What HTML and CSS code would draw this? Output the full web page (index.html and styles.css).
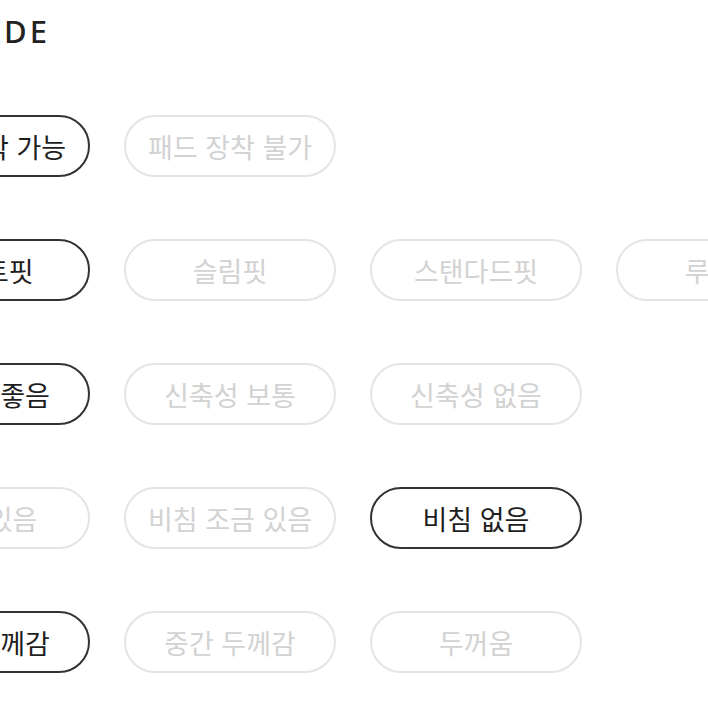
FILE: index.html
```html
<!DOCTYPE html>
<html lang="ko">
<head>
    <meta charset="UTF-8">
    <meta name="viewport" content="width=device-width, initial-scale=1.0">
    <title>SIZE GUIDE</title>
    <link rel="stylesheet" href="styles.css">
</head>
<body>
    <div class="guide">
        <div class="head">
            <h1 class="title">SIZE GUIDE</h1>
        </div>

        <div class="row">
            <span class="pill on">패드 장착 가능</span>
            <span class="pill">패드 장착 불가</span>
        </div>

        <div class="row">
            <span class="pill on">타이트핏</span>
            <span class="pill">슬림핏</span>
            <span class="pill">스탠다드핏</span>
            <span class="pill">루즈핏</span>
        </div>

        <div class="row">
            <span class="pill on">신축성 좋음</span>
            <span class="pill">신축성 보통</span>
            <span class="pill">신축성 없음</span>
        </div>

        <div class="row">
            <span class="pill">비침 있음</span>
            <span class="pill">비침 조금 있음</span>
            <span class="pill on">비침 없음</span>
        </div>

        <div class="row">
            <span class="pill on">얇은 두께감</span>
            <span class="pill">중간 두께감</span>
            <span class="pill">두꺼움</span>
        </div>
    </div>
</body>
</html>
```

FILE: styles.css
```css
body {
    margin: 0;
    background: #fff;
    font-family: "Noto Sans CJK KR", "Noto Sans", sans-serif;
    overflow: hidden;
}
.guide {
    margin-left: -122px;
    width: 1000px;
}
.head {
    display: flex;
    justify-content: flex-end;
    width: 172px;
    height: 115px;
    padding-top: 9px;
    box-sizing: border-box;
}
.title {
    flex: none;
    margin: 0;
    font-family: "Noto Sans", sans-serif;
    font-size: 31px;
    font-weight: 500;
    letter-spacing: 3px;
    color: #222;
    line-height: 44px;
    white-space: nowrap;
}
.row {
    display: flex;
    gap: 34px;
    margin-bottom: 62px;
}
.pill {
    flex: none;
    width: 212px;
    height: 62px;
    box-sizing: border-box;
    border: 2px solid #e4e4e4;
    border-radius: 31px;
    display: flex;
    align-items: center;
    justify-content: center;
    font-size: 27px;
    color: #d2d2d2;
}
.pill.on {
    border-color: #333;
    color: #1e1e1e;
}
```
